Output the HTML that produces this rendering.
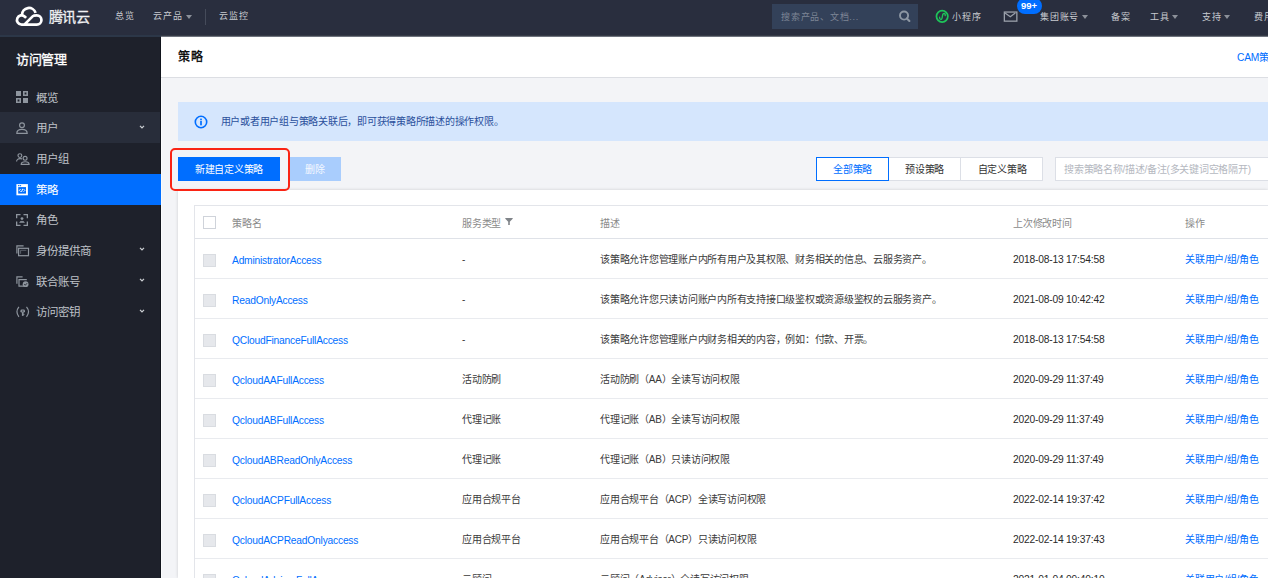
<!DOCTYPE html>
<html lang="zh-CN">
<head>
<meta charset="utf-8">
<style>
*{margin:0;padding:0;box-sizing:border-box;}
html,body{width:1268px;height:578px;overflow:hidden;background:#f3f4f7;font-family:"Liberation Sans",sans-serif;}
.a{position:absolute;white-space:nowrap;}
.c{letter-spacing:-0.25px;}
.nav{color:#c8cbd0;font-size:9px;line-height:12px;letter-spacing:0.75px;}
.tri{position:absolute;width:0;height:0;border-left:3px solid transparent;border-right:3px solid transparent;border-top:4px solid #8b9099;}
.mi{position:absolute;left:0;width:160px;height:30.65px;}
.mt{position:absolute;left:35.5px;top:1px;line-height:30.65px;font-size:11.5px;color:#bfc2c8;}
.chev{position:absolute;left:139px;top:12.5px;width:6px;height:4px;}
.cb{position:absolute;left:203px;width:13px;height:13px;border:1px solid #d9dce1;background:#e6e8ec;}
.lk{color:#006eff;font-size:10.25px;line-height:14px;letter-spacing:-0.21px;}
.td{font-size:10px;line-height:14px;color:#3a3a3a;letter-spacing:-0.25px;}
.dt{font-size:10.25px;line-height:14px;letter-spacing:-0.2px;color:#2a2a2a;}
.th{font-size:10px;line-height:14px;color:#8a8a8a;letter-spacing:-0.25px;}
.rl{position:absolute;left:195px;width:1073px;height:1px;background:#e9ebef;}
</style>
</head>
<body>
<div class="a" style="left:0;top:0;width:1268px;height:35px;background:#292e3e;"></div>
<div class="a" style="left:0;top:35px;width:161px;height:2px;background:#2c3748;"></div>
<div class="a" style="left:161px;top:35px;width:1107px;height:2px;background:linear-gradient(#1a1f2b,#8a8f99);"></div>
<svg class="a" style="left:13px;top:4px" width="33" height="25" viewBox="0 0 33 25" fill="none" stroke="#fff" stroke-width="2.7">
  <path d="M9 11.0 A6.95 6.95 0 0 1 22.6 8.9"/>
  <path d="M13.1 13.9 L11.89 12.71 A4.65 4.65 0 1 0 8.6 20.65 H23.8 A4.65 4.65 0 0 0 23.8 11.35 C22.0 11.35 20.6 11.4 19.9 12.1 L11.35 20.65"/>
</svg>
<div class="a" style="left:49px;top:8.5px;font-size:14px;line-height:17px;letter-spacing:-0.6px;-webkit-text-stroke:0.3px #f0f1f3;color:#f0f1f3;">腾讯云</div>
<div class="a nav" style="left:115px;top:9.5px;">总览</div>
<div class="a nav" style="left:153px;top:9.5px;">云产品</div>
<div class="tri" style="left:186px;top:15px;"></div>
<div class="a" style="left:205px;top:9px;width:1px;height:16px;background:#454b5a;"></div>
<div class="a nav" style="left:219px;top:9.5px;">云监控</div>
<div class="a" style="left:772px;top:4px;width:146px;height:24.5px;background:#334159;"></div>
<div class="a nav" style="left:781px;top:10.5px;color:#7d8595;">搜索产品、文档...</div>
<svg class="a" style="left:898px;top:10px" width="14" height="14" viewBox="0 0 14 14"><circle cx="6.05" cy="5.55" r="4.05" fill="none" stroke="#8d97a3" stroke-width="1.9"/><path d="M8.9 8.4 L11.4 10.9" stroke="#8d97a3" stroke-width="2.1" stroke-linecap="round"/></svg>
<svg class="a" style="left:930px;top:5px" width="25" height="23" viewBox="0 0 25 23"><circle cx="12.15" cy="11.35" r="5.7" fill="none" stroke="#1ec45a" stroke-width="1.75"/><path d="M9.6 12.2 C9.2 14.6 11.9 15.3 12.2 12.5 L12.6 10.2 C13 7.6 15.7 8.2 15.2 10.6" fill="none" stroke="#1ec45a" stroke-width="1.35" stroke-linecap="round"/></svg>
<div class="a nav" style="left:952px;top:10.5px;">小程序</div>
<svg class="a" style="left:1003px;top:11px" width="15" height="11" viewBox="0 0 15 11"><rect x="1.35" y="1.05" width="12.5" height="9.1" fill="none" stroke="#9aa0aa" stroke-width="1.3"/><path d="M2 2 L7.3 5.7 L12.3 2" fill="none" stroke="#9aa0aa" stroke-width="1.3"/></svg>
<div class="a" style="left:1016.5px;top:-2px;width:25px;height:16px;border-radius:8px;background:#006eff;color:#fff;font-size:9.5px;line-height:16px;text-align:center;font-weight:bold;">99+</div>
<div class="a nav" style="left:1040px;top:10.5px;">集团账号</div>
<div class="tri" style="left:1082px;top:15px;"></div>
<div class="a nav" style="left:1111px;top:10.5px;">备案</div>
<div class="a nav" style="left:1150px;top:10.5px;">工具</div>
<div class="tri" style="left:1172px;top:15px;"></div>
<div class="a nav" style="left:1202px;top:10.5px;">支持</div>
<div class="tri" style="left:1224px;top:15px;"></div>
<div class="a nav" style="left:1254px;top:10.5px;">费用</div>
<div class="a" style="left:0;top:37px;width:161px;height:541px;background:#1e212b;">
<div class="mi" style="top:44.60px;"><div class="mt">概览</div></div>
<div class="mi" style="top:75.25px;background:#282d3a;width:161px;"><div class="mt">用户</div><svg class="chev" viewBox="0 0 6 4"><path d="M1 0.9 L3 2.9 L5 0.9" fill="none" stroke="#c9ccd1" stroke-width="1.3"/></svg></div>
<div class="mi" style="top:105.90px;"><div class="mt">用户组</div></div>
<div class="mi" style="top:136.55px;background:#006eff;width:161px;height:31.35px;"><div class="mt" style="color:#fff;">策略</div></div>
<div class="mi" style="top:167.20px;"><div class="mt">角色</div></div>
<div class="mi" style="top:197.85px;"><div class="mt">身份提供商</div><svg class="chev" viewBox="0 0 6 4"><path d="M1 0.9 L3 2.9 L5 0.9" fill="none" stroke="#c9ccd1" stroke-width="1.3"/></svg></div>
<div class="mi" style="top:228.50px;"><div class="mt">联合账号</div><svg class="chev" viewBox="0 0 6 4"><path d="M1 0.9 L3 2.9 L5 0.9" fill="none" stroke="#c9ccd1" stroke-width="1.3"/></svg></div>
<div class="mi" style="top:259.15px;"><div class="mt">访问密钥</div><svg class="chev" viewBox="0 0 6 4"><path d="M1 0.9 L3 2.9 L5 0.9" fill="none" stroke="#c9ccd1" stroke-width="1.3"/></svg></div>
<div class="a" style="left:16px;top:14px;font-size:13px;line-height:18px;letter-spacing:-0.3px;-webkit-text-stroke:0.35px #fff;color:#fff;">访问管理</div>
<svg class="a" style="left:16px;top:54px" width="12" height="12" viewBox="0 0 12 12" fill="#8e959e"><rect x="0" y="0" width="5" height="5"/><path d="M7 0h5v5h-5z M8.6 1.6v1.8h1.8v-1.8z" fill-rule="evenodd"/><path d="M0 7h5v5h-5z M1.6 8.6v1.8h1.8v-1.8z" fill-rule="evenodd"/><rect x="7" y="7" width="5" height="5"/></svg>
<svg class="a" style="left:16px;top:84.5px" width="12" height="12" viewBox="0 0 12 12" fill="none" stroke="#8e959e" stroke-width="1.2"><circle cx="6" cy="3.2" r="2.4"/><path d="M0.8 11.4 C0.8 8.4 3 7.4 6 7.4 C9 7.4 11.2 8.4 11.2 11.4 Z"/></svg>
<svg class="a" style="left:15.5px;top:115.5px" width="14" height="13" viewBox="0 0 14 13" fill="none" stroke="#8e959e" stroke-width="1.15"><circle cx="3.9" cy="2.6" r="1.9"/><path d="M0.6 8.6 C0.6 6.6 2.1 5.6 4.1 5.6 C4.9 5.6 5.5 5.7 6.1 5.9"/><circle cx="9.1" cy="5.3" r="1.95"/><path d="M5.2 11.3 C5.2 9.5 7.1 8.7 9.2 8.7 C11.3 8.7 13.1 9.5 13.1 11.3 Z"/></svg>
<svg class="a" style="left:16px;top:146.5px" width="12" height="12" viewBox="0 0 12 12"><rect x="0.4" y="0.1" width="11.5" height="11.2" fill="#fff"/><rect x="2.2" y="3.1" width="7.8" height="6.5" fill="#006eff"/><rect x="2" y="1.1" width="1.5" height="1.1" fill="#006eff"/><rect x="4" y="1.1" width="1.1" height="1.1" fill="#006eff"/><path d="M4.6 5.1 L3.3 6.4 L4.6 7.7 M7.6 5.1 L8.9 6.4 L7.6 7.7 M6.7 4.8 L5.5 8" stroke="#fff" stroke-width="0.95" fill="none"/></svg>
<svg class="a" style="left:16px;top:177px" width="12" height="12" viewBox="0 0 12 12" fill="none" stroke="#8e959e" stroke-width="1.3"><path d="M0.65 4.2V0.65H4.5 M7.5 0.65H11.35V4.2 M0.65 7.5V11.35H4.5 M7.5 11.35H11.35V7.5"/><circle cx="6" cy="4.6" r="1.4" fill="#8e959e" stroke="none"/><path d="M3.6 8.4 C3.6 6.9 8.4 6.9 8.4 8.4 Z" fill="#8e959e" stroke="#8e959e" stroke-width="0.6"/></svg>
<svg class="a" style="left:15.5px;top:208px" width="14" height="12" viewBox="0 0 14 12" fill="none" stroke="#8e959e" stroke-width="1.2"><path d="M0.9 8.6V0.9H7.6"/><rect x="2.6" y="3.3" width="9.9" height="7.4"/><path d="M4.6 5.3H10.4 M4.6 5.3V8.8" stroke-width="0.9" opacity="0.6"/></svg>
<svg class="a" style="left:15.5px;top:238.5px" width="14" height="12" viewBox="0 0 14 12" fill="none" stroke="#8e959e" stroke-width="1.2"><path d="M0.9 7.8V0.9H6.6"/><path d="M10.8 3.6H3v6.6h5"/><circle cx="9.6" cy="8.2" r="2.9" fill="#8e959e" stroke="none"/><path d="M8.2 8.2 L9.3 9.2 L11.1 7.2" stroke="#1e212b" stroke-width="0.9"/></svg>
<svg class="a" style="left:15.5px;top:269px" width="14" height="12" viewBox="0 0 14 12" fill="none" stroke="#8e959e" stroke-width="1.2"><path d="M2.9 0.9 Q-1 5.85 2.9 10.8 M10.5 0.9 Q14.6 5.85 10.5 10.8"/><rect x="4.4" y="3.5" width="4.6" height="3.1" rx="1.4" fill="#8e959e" stroke="none"/><rect x="5.9" y="4.6" width="1.6" height="0.9" fill="#1e212b" stroke="none"/><rect x="5.9" y="6.2" width="1.7" height="3.7" fill="#8e959e" stroke="none"/><rect x="7.3" y="7.9" width="1.1" height="1" fill="#8e959e" stroke="none"/></svg>
</div>
<div class="a" style="left:160px;top:37px;width:1px;height:541px;background:#11141c;"></div>
<div class="a" style="left:161px;top:78px;width:1px;height:500px;background:#fafbfc;"></div>
<div class="a" style="left:160px;top:173.65px;width:1px;height:31.35px;background:#006eff;"></div>
<div class="a" style="left:161px;top:37px;width:1107px;height:41px;background:#fff;border-bottom:1px solid #dcdee3;"></div>
<div class="a" style="left:178px;top:49.25px;font-size:12px;line-height:17px;letter-spacing:0.5px;-webkit-text-stroke:0.3px #000;color:#000;">策略</div>
<div class="a lk" style="left:1237px;top:51px;">CAM策略</div>
<div class="a" style="left:178px;top:102px;width:1090px;height:38.5px;background:#d5e6fd;"></div>
<svg class="a" style="left:194px;top:114.6px" width="14" height="14" viewBox="0 0 14 14"><circle cx="7" cy="7" r="5.7" fill="none" stroke="#006eff" stroke-width="1.6"/><rect x="6.15" y="5.9" width="1.7" height="4.4" fill="#006eff"/><rect x="6.15" y="3.6" width="1.7" height="1.6" fill="#006eff"/></svg>
<div class="a c" style="left:220.5px;top:115px;font-size:10px;line-height:14px;color:#2b509c;">用户或者用户组与策略关联后，即可获得策略所描述的操作权限。</div>
<div class="a c" style="left:178px;top:157px;width:102px;height:24px;background:#006eff;color:#fff;font-size:10px;line-height:26px;text-align:center;">新建自定义策略</div>
<div class="a c" style="left:289.5px;top:157px;width:51.5px;height:24px;padding-right:1.5px;background:#a9cdfd;color:#f4f8ff;font-size:10px;line-height:26px;text-align:center;">删除</div>
<div class="a" style="left:816px;top:157px;width:227px;height:24px;background:#fff;border:1px solid #dcdfe6;"></div>
<div class="a" style="left:888px;top:157px;width:1px;height:24px;background:#dcdfe6;"></div>
<div class="a" style="left:960px;top:157px;width:1px;height:24px;background:#dcdfe6;"></div>
<div class="a c" style="left:816px;top:157px;width:73px;height:24px;border:1px solid #006eff;color:#006eff;font-size:10px;line-height:24.5px;text-align:center;">全部策略</div>
<div class="a c" style="left:889px;top:157px;width:71px;height:24px;color:#333;font-size:10px;line-height:26.5px;text-align:center;">预设策略</div>
<div class="a c" style="left:961px;top:157px;width:82px;height:24px;color:#333;font-size:10px;line-height:26.5px;text-align:center;">自定义策略</div>
<div class="a" style="left:1055px;top:157px;width:230px;height:24px;background:#fff;border:1px solid #dcdfe6;"></div>
<div class="a c" style="left:1064px;top:157px;font-size:10px;line-height:26.5px;color:#b5b8bf;">搜索策略名称/描述/备注(多关键词空格隔开)</div>
<div class="a" style="left:178px;top:190px;width:1090px;height:388px;background:#fff;box-shadow:0 0 3px rgba(0,0,0,.16);"></div>
<div class="a" style="left:194px;top:205px;width:1074px;height:373px;border:1px solid #e3e5ea;border-right:none;border-bottom:none;"></div>
<div class="a" style="left:195px;top:238px;width:1073px;height:1px;background:#dfe2e8;"></div>
<div class="cb" style="top:216px;background:#fff;border-color:#cfd3da;"></div>
<div class="a th" style="left:232px;top:217.25px;">策略名</div>
<div class="a th" style="left:462px;top:217.25px;">服务类型</div>
<div class="a th" style="left:600px;top:217.25px;">描述</div>
<div class="a th" style="left:1013px;top:217.25px;">上次修改时间</div>
<div class="a th" style="left:1185px;top:217.25px;">操作</div>
<svg class="a" style="left:505px;top:217px" width="8" height="9" viewBox="0 0 8 9"><path d="M0.3 0.9 H7.7 V1.7 L4.8 4.7 V7.9 H3.2 V4.7 L0.3 1.7 Z" fill="#808489"/></svg>
<div class="cb" style="top:254px;"></div>
<div class="a lk" style="left:232px;top:253.5px;">AdministratorAccess</div>
<div class="a td" style="left:462px;top:252.5px;">-</div>
<div class="a td" style="left:600px;top:252.5px;">该策略允许您管理账户内所有用户及其权限、财务相关的信息、云服务资产。</div>
<div class="a dt" style="left:1013px;top:253.25px;">2018-08-13 17:54:58</div>
<div class="a lk c" style="left:1185px;top:253px;font-size:10px;">关联用户/组/角色</div>
<div class="rl" style="top:278px;"></div>
<div class="cb" style="top:294px;"></div>
<div class="a lk" style="left:232px;top:293.5px;">ReadOnlyAccess</div>
<div class="a td" style="left:462px;top:292.5px;">-</div>
<div class="a td" style="left:600px;top:292.5px;">该策略允许您只读访问账户内所有支持接口级鉴权或资源级鉴权的云服务资产。</div>
<div class="a dt" style="left:1013px;top:293.25px;">2021-08-09 10:42:42</div>
<div class="a lk c" style="left:1185px;top:293px;font-size:10px;">关联用户/组/角色</div>
<div class="rl" style="top:318px;"></div>
<div class="cb" style="top:334px;"></div>
<div class="a lk" style="left:232px;top:333.5px;">QCloudFinanceFullAccess</div>
<div class="a td" style="left:462px;top:332.5px;">-</div>
<div class="a td" style="left:600px;top:332.5px;">该策略允许您管理账户内财务相关的内容，例如：付款、开票。</div>
<div class="a dt" style="left:1013px;top:333.25px;">2018-08-13 17:54:58</div>
<div class="a lk c" style="left:1185px;top:333px;font-size:10px;">关联用户/组/角色</div>
<div class="rl" style="top:358px;"></div>
<div class="cb" style="top:374px;"></div>
<div class="a lk" style="left:232px;top:373.5px;">QcloudAAFullAccess</div>
<div class="a td" style="left:462px;top:372.5px;">活动防刷</div>
<div class="a td" style="left:600px;top:372.5px;">活动防刷（AA）全读写访问权限</div>
<div class="a dt" style="left:1013px;top:373.25px;">2020-09-29 11:37:49</div>
<div class="a lk c" style="left:1185px;top:373px;font-size:10px;">关联用户/组/角色</div>
<div class="rl" style="top:398px;"></div>
<div class="cb" style="top:414px;"></div>
<div class="a lk" style="left:232px;top:413.5px;">QcloudABFullAccess</div>
<div class="a td" style="left:462px;top:412.5px;">代理记账</div>
<div class="a td" style="left:600px;top:412.5px;">代理记账（AB）全读写访问权限</div>
<div class="a dt" style="left:1013px;top:413.25px;">2020-09-29 11:37:49</div>
<div class="a lk c" style="left:1185px;top:413px;font-size:10px;">关联用户/组/角色</div>
<div class="rl" style="top:438px;"></div>
<div class="cb" style="top:454px;"></div>
<div class="a lk" style="left:232px;top:453.5px;">QcloudABReadOnlyAccess</div>
<div class="a td" style="left:462px;top:452.5px;">代理记账</div>
<div class="a td" style="left:600px;top:452.5px;">代理记账（AB）只读访问权限</div>
<div class="a dt" style="left:1013px;top:453.25px;">2020-09-29 11:37:49</div>
<div class="a lk c" style="left:1185px;top:453px;font-size:10px;">关联用户/组/角色</div>
<div class="rl" style="top:478px;"></div>
<div class="cb" style="top:494px;"></div>
<div class="a lk" style="left:232px;top:493.5px;">QcloudACPFullAccess</div>
<div class="a td" style="left:462px;top:492.5px;">应用合规平台</div>
<div class="a td" style="left:600px;top:492.5px;">应用合规平台（ACP）全读写访问权限</div>
<div class="a dt" style="left:1013px;top:493.25px;">2022-02-14 19:37:42</div>
<div class="a lk c" style="left:1185px;top:493px;font-size:10px;">关联用户/组/角色</div>
<div class="rl" style="top:518px;"></div>
<div class="cb" style="top:534px;"></div>
<div class="a lk" style="left:232px;top:533.5px;">QcloudACPReadOnlyaccess</div>
<div class="a td" style="left:462px;top:532.5px;">应用合规平台</div>
<div class="a td" style="left:600px;top:532.5px;">应用合规平台（ACP）只读访问权限</div>
<div class="a dt" style="left:1013px;top:533.25px;">2022-02-14 19:37:43</div>
<div class="a lk c" style="left:1185px;top:533px;font-size:10px;">关联用户/组/角色</div>
<div class="rl" style="top:558px;"></div>
<div class="cb" style="top:574px;"></div>
<div class="a lk" style="left:232px;top:573.5px;">QcloudAdvisorFullAccess</div>
<div class="a td" style="left:462px;top:572.5px;">云顾问</div>
<div class="a td" style="left:600px;top:572.5px;">云顾问（Advisor）全读写访问权限</div>
<div class="a dt" style="left:1013px;top:573.25px;">2021-01-04 09:40:10</div>
<div class="a lk c" style="left:1185px;top:573px;font-size:10px;">关联用户/组/角色</div>
<div class="rl" style="top:598px;"></div>
<div class="a" style="left:170px;top:147.5px;width:119.5px;height:43px;border:2.75px solid #fa2414;border-radius:5px;"></div>
</body>
</html>
